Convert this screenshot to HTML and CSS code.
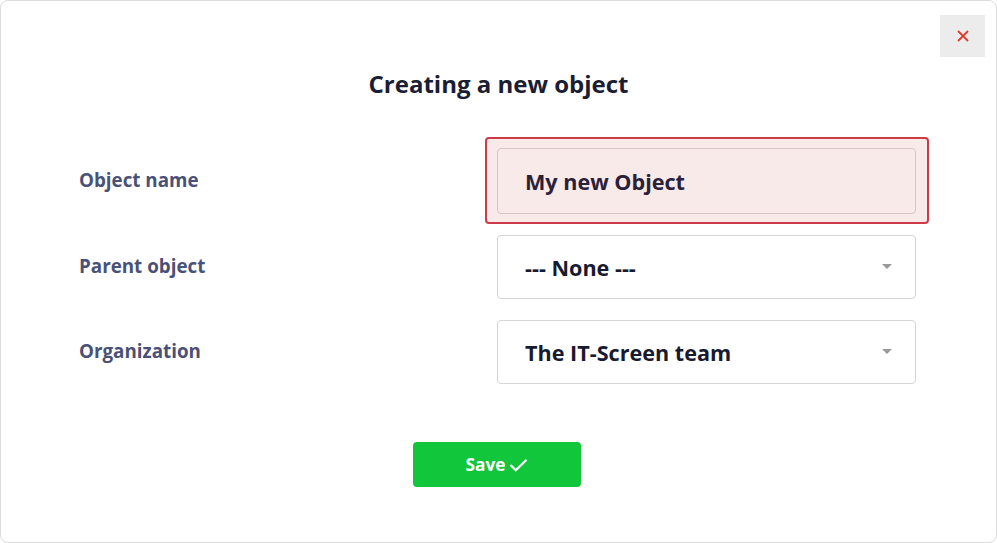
FILE: index.html
```html
<!DOCTYPE html>
<html lang="en">
<head>
    <meta charset="UTF-8" />
    <meta name="viewport" content="width=device-width, initial-scale=1" />
    <title>Creating a new object</title>
    <link rel="stylesheet" href="styles.css">
</head>
<body>

    <div class="modal">
        <button class="close-btn" type="button" aria-label="Close">
            <svg width="14" height="14" viewBox="0 0 14 14">
                <path d="M2 2 L12 12 M12 2 L2 12" stroke="#e03c2c" stroke-width="1.8" fill="none" />
            </svg>
        </button>

        <h1>Creating a new object</h1>

        <div class="form">
            <label class="form-label" for="objectName">Object name</label>
            <div class="field has-error">
                <input type="text" id="objectName" value="My new Object" />
            </div>

            <label class="form-label" for="parentObject">Parent object</label>
            <div class="field select-wrap">
                <select id="parentObject">
                    <option>--- None ---</option>
                </select>
            </div>

            <label class="form-label" for="organization">Organization</label>
            <div class="field select-wrap">
                <select id="organization">
                    <option>The IT-Screen team</option>
                </select>
            </div>
        </div>

        <div class="actions">
            <button class="save-btn" type="button">
                Save
                <svg width="19" height="14" viewBox="0 0 19 14">
                    <path d="M1.5 7 L6.8 12.2 L17.5 1.8" stroke="#fff" stroke-width="2.3" fill="none" />
                </svg>
            </button>
        </div>
    </div>

</body>
</html>
```

FILE: styles.css
```css
* {
    box-sizing: border-box;
}

body {
    margin: 0;
    font-family: 'Open Sans', sans-serif;
    background-color: #fff;
}

.modal {
    position: relative;
    width: 997px;
    height: 543px;
    border: 1px solid #dcdcdc;
    border-radius: 8px;
    background-color: #fff;
    padding-top: 67px;
}

.close-btn {
    position: absolute;
    top: 14px;
    right: 11px;
    width: 45px;
    height: 42px;
    border: none;
    background-color: #ececec;
    display: flex;
    align-items: center;
    justify-content: center;
    padding: 0;
    cursor: pointer;
}

h1 {
    margin: 0;
    text-align: center;
    font-size: 24px;
    line-height: 32px;
    font-weight: 700;
    color: #1a1d33;
}

.form {
    display: grid;
    grid-template-columns: 418px 1fr;
    row-gap: 21px;
    align-items: center;
    padding: 0 80px 0 78px;
    margin-top: 48px;
}

.form-label {
    font-size: 18.8px;
    font-weight: 700;
    color: #4a5177;
    margin-top: -3px;
}

.field input,
.field select {
    width: 100%;
    font-family: 'Open Sans', sans-serif;
    font-size: 21.6px;
    font-weight: 700;
    border: 1px solid #d4d4d4;
    border-radius: 4px;
    background-color: #fff;
    color: #171a30;
    padding: 0 27px;
}

.field input {
    height: 66px;
}

.field select {
    height: 64px;
    appearance: none;
    -webkit-appearance: none;
}

.has-error {
    margin: -11px -13px -10px -12px;
    padding: 9px 11px 8px 10px;
    border: 2px solid #cf3a48;
    border-radius: 4px;
    background-color: #f9eaea;
}

.has-error input {
    background-color: #f9eaea;
    border-color: #d8c4c4;
    color: #2a2139;
}

.select-wrap {
    position: relative;
}

.select-wrap::after {
    content: "";
    position: absolute;
    right: 24px;
    top: 29px;
    border-left: 5px solid transparent;
    border-right: 5px solid transparent;
    border-top: 5px solid #999;
    pointer-events: none;
}

.actions {
    display: flex;
    justify-content: center;
    margin-top: 58px;
    padding-right: 4px;
}

.save-btn {
    width: 168px;
    height: 45px;
    background-color: #11c63b;
    color: #fff;
    font-family: 'Open Sans', sans-serif;
    font-weight: 700;
    font-size: 17.3px;
    border: none;
    border-radius: 4px;
    display: flex;
    align-items: center;
    justify-content: center;
    gap: 3px;
    cursor: pointer;
}
```
